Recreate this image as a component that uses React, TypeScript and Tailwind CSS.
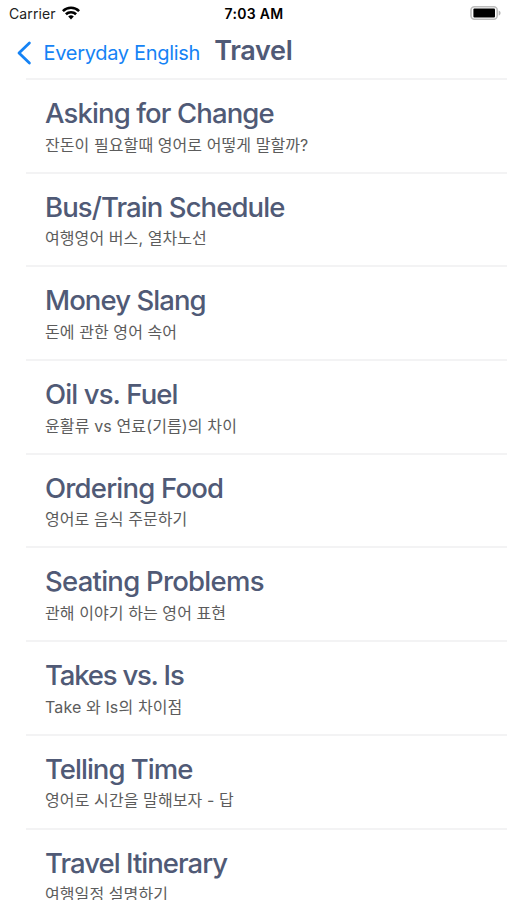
import React from "react";

interface Lesson {
  title: string;
  subtitle: string;
  titleClass: string;
  subtitleClass: string;
}

const lessons: Lesson[] = [
  { title: "Asking for Change", subtitle: "잔돈이 필요할때 영어로 어떻게 말할까?", titleClass: "tracking-[-0.88px]", subtitleClass: "tracking-[0.08px]" },
  { title: "Bus/Train Schedule", subtitle: "여행영어 버스, 열차노선", titleClass: "tracking-[-0.91px]", subtitleClass: "tracking-[0.08px]" },
  { title: "Money Slang", subtitle: "돈에 관한 영어 속어", titleClass: "tracking-[-0.93px]", subtitleClass: "tracking-[0.08px]" },
  { title: "Oil vs. Fuel", subtitle: "윤활류 vs 연료(기름)의 차이", titleClass: "tracking-[-0.88px]", subtitleClass: "tracking-[0.13px]" },
  { title: "Ordering Food", subtitle: "영어로 음식 주문하기", titleClass: "tracking-[-0.8px]", subtitleClass: "tracking-[0.08px]" },
  { title: "Seating Problems", subtitle: "관해 이야기 하는 영어 표현", titleClass: "tracking-[-0.75px]", subtitleClass: "tracking-[0.08px]" },
  { title: "Takes vs. Is", subtitle: "Take 와 Is의 차이점", titleClass: "tracking-[-1.2px]", subtitleClass: "tracking-[0.12px]" },
  { title: "Telling Time", subtitle: "영어로 시간을 말해보자 - 답", titleClass: "tracking-[-0.98px]", subtitleClass: "tracking-[0.1px]" },
  { title: "Travel Itinerary", subtitle: "여행일정 설명하기", titleClass: "tracking-[-0.97px]", subtitleClass: "tracking-[0.08px]" },
];

const WifiIcon = () => (
  <svg width="18" height="14" viewBox="0 0 18 14" fill="none" stroke="#000" strokeWidth="2.6">
    <path d="M0.9 5.1a11.6 11.6 0 0 1 16.2 0" />
    <path d="M3.9 8.3a7.3 7.3 0 0 1 10.2 0" />
    <path d="M9 13.4 6.2 10.6a4 4 0 0 1 5.6 0Z" fill="#000" stroke="none" />
  </svg>
);

const BatteryIcon = () => (
  <svg width="31" height="14" viewBox="0 0 31 14" fill="none">
    <rect x="1" y="0.8" width="26.2" height="12.4" rx="3.4" stroke="#bdbdbd" strokeWidth="1.6" />
    <rect x="3.4" y="2.6" width="21.6" height="8.8" rx="1" fill="#000" />
    <path d="M28.7 4.4c2.5 1 2.5 4.2 0 5.2Z" fill="#b5b5b5" />
  </svg>
);

const StatusBar = () => (
  <div className="grid h-[27px] grid-cols-3 items-center pl-[9px] pr-[6px] text-[14px] text-black">
    <div className="flex items-center gap-1.5">
      <span className="tracking-[0.1px] text-[#222]">Carrier</span>
      <div className="pb-[2px]">
        <WifiIcon />
      </div>
    </div>
    <span className="pr-0.5 text-center font-semibold tracking-[0.3px]">7:03 AM</span>
    <div className="flex justify-end pb-px">
      <BatteryIcon />
    </div>
  </div>
);

const NavBar = () => (
  <div className="flex h-[51px] items-center pl-[17px]">
    <button className="flex items-center gap-[11.5px] text-[#1583f5]">
      <svg width="15" height="24" viewBox="0 0 15 24" fill="none" stroke="currentColor" strokeWidth="2.8" strokeLinecap="round" strokeLinejoin="round">
        <path d="M12.4 2 2 12l10.4 10" />
      </svg>
      <span className="whitespace-nowrap pt-px text-[20px] tracking-[-0.3px]">Everyday English</span>
    </button>
    <h1 className="ml-[14px] pb-[3px] text-[27px] font-semibold tracking-[-0.3px] text-[#505a76]">Travel</h1>
  </div>
);

const LessonRow = ({ lesson }: { lesson: Lesson }) => (
  <li className="ml-[26px] h-[93.7px] border-t-2 border-[#f3f3f4] pl-[19px] pt-4">
    <div className="h-[34px] whitespace-nowrap text-[27.5px] leading-[34px] font-medium text-[#505a76]">
      <span className={lesson.titleClass}>{lesson.title}</span>
    </div>
    <div className="mt-[2.5px] h-6 whitespace-nowrap text-[16px] leading-6 text-[#5c5c5c]">
      <span className={lesson.subtitleClass}>{lesson.subtitle}</span>
    </div>
  </li>
);

const App: React.FC = () => {
  return (
    <div className="h-[900px] w-[507px] overflow-hidden bg-white font-['Inter','Noto_Sans_CJK_KR',sans-serif]">
      <StatusBar />
      <NavBar />
      <ul>
        {lessons.map((lesson) => (
          <LessonRow key={lesson.title} lesson={lesson} />
        ))}
      </ul>
    </div>
  );
};

export default App;
